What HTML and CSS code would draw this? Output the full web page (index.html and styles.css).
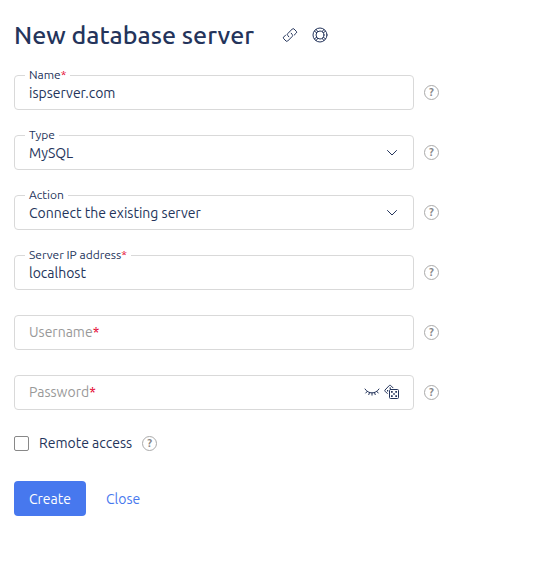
FILE: index.html
```
<!DOCTYPE html>
<html lang="en">
<head>
    <meta charset="UTF-8">
    <meta name="viewport" content="width=device-width, initial-scale=1.0">
    <title>New database server</title>
    <link rel="stylesheet" href="styles.css">
</head>
<body>
    <header class="page-header">
        <h1>New database server</h1>
        <a class="header-icon" href="#link" aria-label="Copy link">
            <svg width="16" height="16" viewBox="0 0 16 16">
                <path d="M6.800 9.800 5.800 8.500a1.500 1.500 0 0 1 0-2L10.300 2a1.200 1.200 0 0 1 1.700 0L14.300 4.300a1.200 1.200 0 0 1 0 1.700L12.300 8"/>
                <path d="M9.200 6.200 10.200 7.500a1.500 1.500 0 0 1 0 2L5.700 14a1.200 1.200 0 0 1-1.700 0L1.700 11.700a1.200 1.200 0 0 1 0-1.700L3.700 8"/>
            </svg>
        </a>
        <a class="header-icon" href="#help" aria-label="Help">
            <svg width="16" height="16" viewBox="0 0 16 16">
                <circle cx="8" cy="8" r="7"/>
                <circle cx="8" cy="8" r="4"/>
                <path d="M2.500 4.200 4.600 5.700M4.200 2.500l1.500 2.100M11.800 2.500l-1.500 2.100M13.500 4.200l-2.100 1.500M13.500 11.800l-2.100-1.500M11.800 13.500l-1.500-2.100M4.200 13.500l1.500-2.100M2.500 11.800l2.100-1.500"/>
            </svg>
        </a>
    </header>

    <form id="serverForm">
        <div class="form-row">
            <div class="field">
                <input type="text" id="name" name="name" value="ispserver.com" required>
                <label for="name">Name<span class="required">*</span></label>
            </div>
            <button type="button" class="hint" aria-label="Name help">?</button>
        </div>
        <div class="form-row">
            <div class="field">
                <select id="type" name="type">
                    <option>MySQL</option>
                    <option>PostgreSQL</option>
                </select>
                <label for="type">Type</label>
                <svg class="arrow" width="12" height="8" viewBox="0 0 12 8"><path d="M1.500 1.500 6 6l4.500-4.500"/></svg>
            </div>
            <button type="button" class="hint" aria-label="Type help">?</button>
        </div>
        <div class="form-row">
            <div class="field">
                <select id="action" name="action">
                    <option>Connect the existing server</option>
                    <option>Create a new server</option>
                </select>
                <label for="action">Action</label>
                <svg class="arrow" width="12" height="8" viewBox="0 0 12 8"><path d="M1.500 1.500 6 6l4.500-4.500"/></svg>
            </div>
            <button type="button" class="hint" aria-label="Action help">?</button>
        </div>
        <div class="form-row">
            <div class="field">
                <input type="text" id="address" name="address" value="localhost" required>
                <label for="address">Server IP address<span class="required">*</span></label>
            </div>
            <button type="button" class="hint" aria-label="Server IP address help">?</button>
        </div>
        <div class="form-row">
            <div class="field">
                <input type="text" id="username" name="username" placeholder=" " required>
                <label for="username">Username<span class="required">*</span></label>
            </div>
            <button type="button" class="hint" aria-label="Username help">?</button>
        </div>
        <div class="form-row">
            <div class="field">
                <input type="password" id="password" name="password" placeholder=" " required>
                <label for="password">Password<span class="required">*</span></label>
                <div class="field-tools">
                    <button type="button" aria-label="Show password">
                        <svg width="16" height="16" viewBox="0 0 16 16">
                            <path d="M1 5c3.500 5.300 10.500 5.300 14 0M3.200 7.400 1.800 9M5.500 8.600l-.7 2M8 9v2.200M10.500 8.600l.7 2M12.800 7.400 14.200 9"/>
                        </svg>
                    </button>
                    <button type="button" aria-label="Generate password">
                        <svg width="16" height="16" viewBox="0 0 16 16">
                            <rect x="5.500" y="5.500" width="9" height="9" rx="1"/>
                            <path d="M3.300 9.500 1 7.200a1 1 0 0 1 0-1.200L5.400 1.400a1 1 0 0 1 1.200 0L9 3.800"/>
                            <path class="dots" d="M7 7h1.700v1.700H7zM11.300 7H13v1.700h-1.700zM9.200 9.200h1.600v1.600H9.200zM7 11.300h1.700V13H7zM11.300 11.300H13V13h-1.700zM5.500 3.500h1.500v1.200H5.500zM3 6h1.200v1.500H3z"/>
                        </svg>
                    </button>
                </div>
            </div>
            <button type="button" class="hint" aria-label="Password help">?</button>
        </div>
        <div class="check-row">
            <input type="checkbox" id="remote" name="remote">
            <label for="remote">Remote access</label>
            <button type="button" class="hint" aria-label="Remote access help">?</button>
        </div>
        <div class="form-actions">
            <button type="submit" class="create">Create</button>
            <a class="close" href="#close">Close</a>
        </div>
    </form>
</body>
</html>
```

FILE: styles.css
```
* {
    box-sizing: border-box;
}
body {
    margin: 0;
    padding: 20px 14px;
    background: #fff;
    color: #24345b;
    font-family: Ubuntu, "Noto Sans", sans-serif;
    font-size: 14px;
    line-height: 20px;
}
button, input, select {
    font: inherit;
    color: inherit;
}
svg {
    display: block;
    fill: none;
    stroke: #24345b;
    stroke-linecap: round;
    stroke-linejoin: round;
}
.page-header {
    display: flex;
    align-items: center;
    gap: 14px;
    margin-bottom: 25px;
}
h1 {
    margin: 0 14px 0 0;
    font-size: 25px;
    font-weight: 500;
    line-height: 30px;
}
.form-row {
    display: flex;
    align-items: center;
    gap: 10px;
    margin-bottom: 25px;
}
.field {
    position: relative;
    flex: 1;
    max-width: 400px;
}
.field input, .field select {
    display: block;
    width: 100%;
    height: 35px;
    padding: 1px 14px 0;
    border: 1px solid #d9d9d9;
    border-radius: 4px;
    background: #fff;
    appearance: none;
    outline: none;
}
.field label {
    position: absolute;
    top: -8px;
    left: 11px;
    padding: 0 4px;
    background: #fff;
    font-size: 12px;
    line-height: 16px;
}
/* empty field: the label sits inside as a placeholder */
.field input:placeholder-shown:not(:focus) + label {
    top: 7px;
    color: #999;
    font-size: 14px;
    line-height: 20px;
}
.field label .required {
    color: #e4002b;
}
.arrow {
    position: absolute;
    top: 14px;
    right: 16px;
    pointer-events: none;
}
.field-tools {
    position: absolute;
    top: 9px;
    right: 14px;
    display: flex;
    gap: 4px;
}
.field-tools button {
    padding: 0;
    border: none;
    background: none;
    cursor: pointer;
}
.dots {
    fill: #24345b;
    stroke: none;
}
.hint {
    flex: none;
    width: 15px;
    height: 15px;
    padding: 0;
    border: 1px solid #aaa;
    border-radius: 50%;
    background: #fff;
    color: #888;
    font-size: 11px;
    font-weight: 700;
    line-height: 13px;
    cursor: pointer;
}
.check-row {
    display: flex;
    align-items: center;
    gap: 10px;
    margin-bottom: 30px;
    line-height: 16px;
}
.check-row input {
    width: 15px;
    height: 15px;
    margin: 0;
    border: 1px solid #888;
    border-radius: 2px;
    appearance: none;
}
.check-row input:checked {
    background: #4778ee;
}
.form-actions {
    display: flex;
    align-items: center;
    gap: 20px;
}
.create {
    height: 35px;
    padding: 0 15px;
    border: none;
    border-radius: 4px;
    background: #4778ee;
    color: #fff;
    cursor: pointer;
}
.close {
    color: #4778ee;
    text-decoration: none;
}
```
